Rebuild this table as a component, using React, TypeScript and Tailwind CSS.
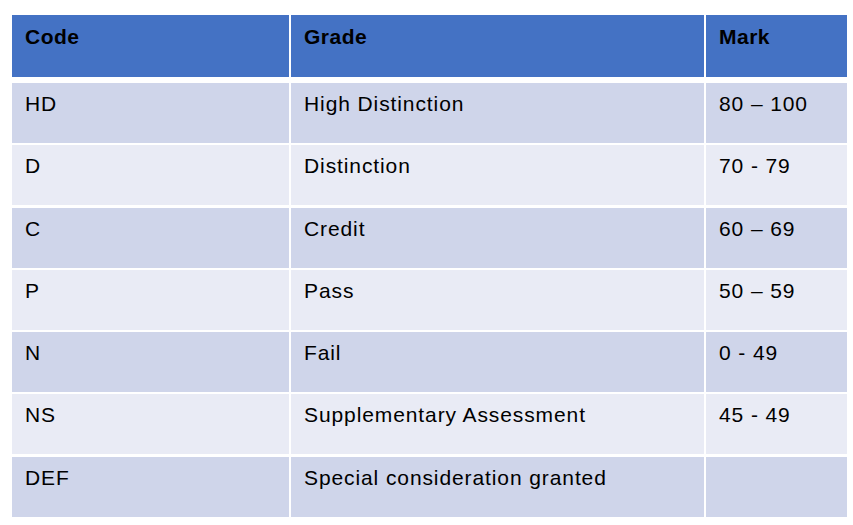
import React from "react";

const rows = [
  { code: "HD", grade: "High Distinction", mark: "80 – 100" },
  { code: "D", grade: "Distinction", mark: "70 - 79" },
  { code: "C", grade: "Credit", mark: "60 – 69" },
  { code: "P", grade: "Pass", mark: "50 – 59" },
  { code: "N", grade: "Fail", mark: "0 - 49" },
  { code: "NS", grade: "Supplementary Assessment", mark: "45 - 49" },
  { code: "DEF", grade: "Special consideration granted", mark: "" },
];

const App = () => {
  return (
    <div className="w-[853px] h-[525px] bg-white pl-[12px] pt-[15px] font-['Liberation_Sans',Arial,sans-serif] text-black">
      <div className="grid grid-cols-[277px_413px_141px] gap-x-[2px] h-[62px] text-[21px] font-bold tracking-[0.5px] leading-[25px]">
        <div className="bg-[#4472c4] pl-[13px] pt-[9px]">Code</div>
        <div className="bg-[#4472c4] pl-[13px] pt-[9px]">Grade</div>
        <div className="bg-[#4472c4] pl-[13px] pt-[9px]">Mark</div>
      </div>

      <div className="mt-[6px] flex flex-col gap-y-[2.3px] text-[21px] tracking-[0.9px] leading-[25px]">
        {rows.map((row, i) => {
          const bg = i % 2 === 0 ? "bg-[#cfd5ea]" : "bg-[#e9ebf5]";
          return (
            <div
              key={row.code}
              className="grid grid-cols-[277px_413px_141px] gap-x-[2px] h-[60px]"
            >
              <div className={`${bg} pl-[13px] pt-[8px]`}>{row.code}</div>
              <div className={`${bg} pl-[13px] pt-[8px]`}>{row.grade}</div>
              <div className={`${bg} pl-[13px] pt-[8px]`}>{row.mark}</div>
            </div>
          );
        })}
      </div>
    </div>
  );
};

export default App;
